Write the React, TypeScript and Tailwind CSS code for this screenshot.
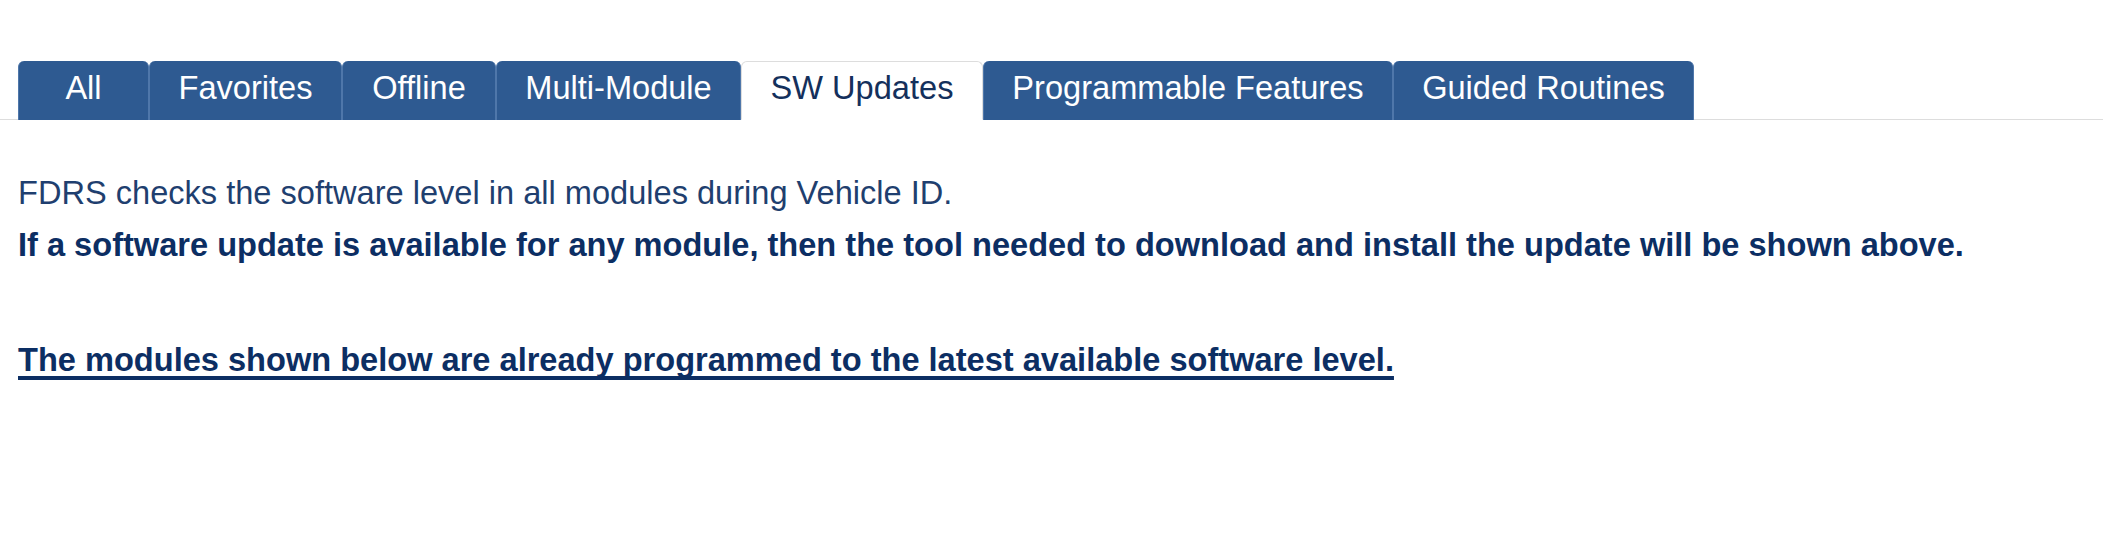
import React from "react";

const tabs = [
  { label: "All", w: "w-[131px]" },
  { label: "Favorites", w: "w-[193px]" },
  { label: "Offline", w: "w-[154px]" },
  { label: "Multi-Module", w: "w-[245px]" },
  { label: "SW Updates", w: "w-[242px]", active: true },
  { label: "Programmable Features", w: "w-[410px]" },
  { label: "Guided Routines", w: "w-[301px]" },
];

export default function App() {
  return (
    <div
      className="w-[2103px] h-[554px] bg-white pt-[61px]"
      style={{ fontFamily: '"Liberation Sans", Arial, sans-serif' }}
    >
      <div className="flex items-end border-b border-[#dddddd] pl-[18px]">
        {tabs.map((t) =>
          t.active ? (
            <div
              key={t.label}
              className={`${t.w} h-[59px] -mb-px pb-[4px] flex items-center justify-center rounded-t-[6px] border border-[#dddddd] border-b-white bg-white text-[32.6px] text-[#14305c]`}
            >
              {t.label}
            </div>
          ) : (
            <div
              key={t.label}
              className={`${t.w} h-[59px] -mb-px pb-[4px] flex items-center justify-center rounded-t-[6px] border-l border-r border-[#4f77aa] bg-[#2e5a91] text-[32.6px] text-white`}
            >
              {t.label}
            </div>
          )
        )}
      </div>
      <div className="pl-[18px] pt-[47px] text-[32.6px]">
        <div className="leading-[52px] text-[#1f3f6f]">
          FDRS checks the software level in all modules during Vehicle ID.
        </div>
        <div className="leading-[52px] font-bold text-[#0c2e63]">
          If a software update is available for any module, then the tool needed to download and install the update will be shown above.
        </div>
        <div className="mt-[63px] leading-[52px] font-bold text-[#0c2e63] underline decoration-[4px] underline-offset-[5px] [text-decoration-skip-ink:none]">
          The modules shown below are already programmed to the latest available software level.
        </div>
      </div>
    </div>
  );
}
